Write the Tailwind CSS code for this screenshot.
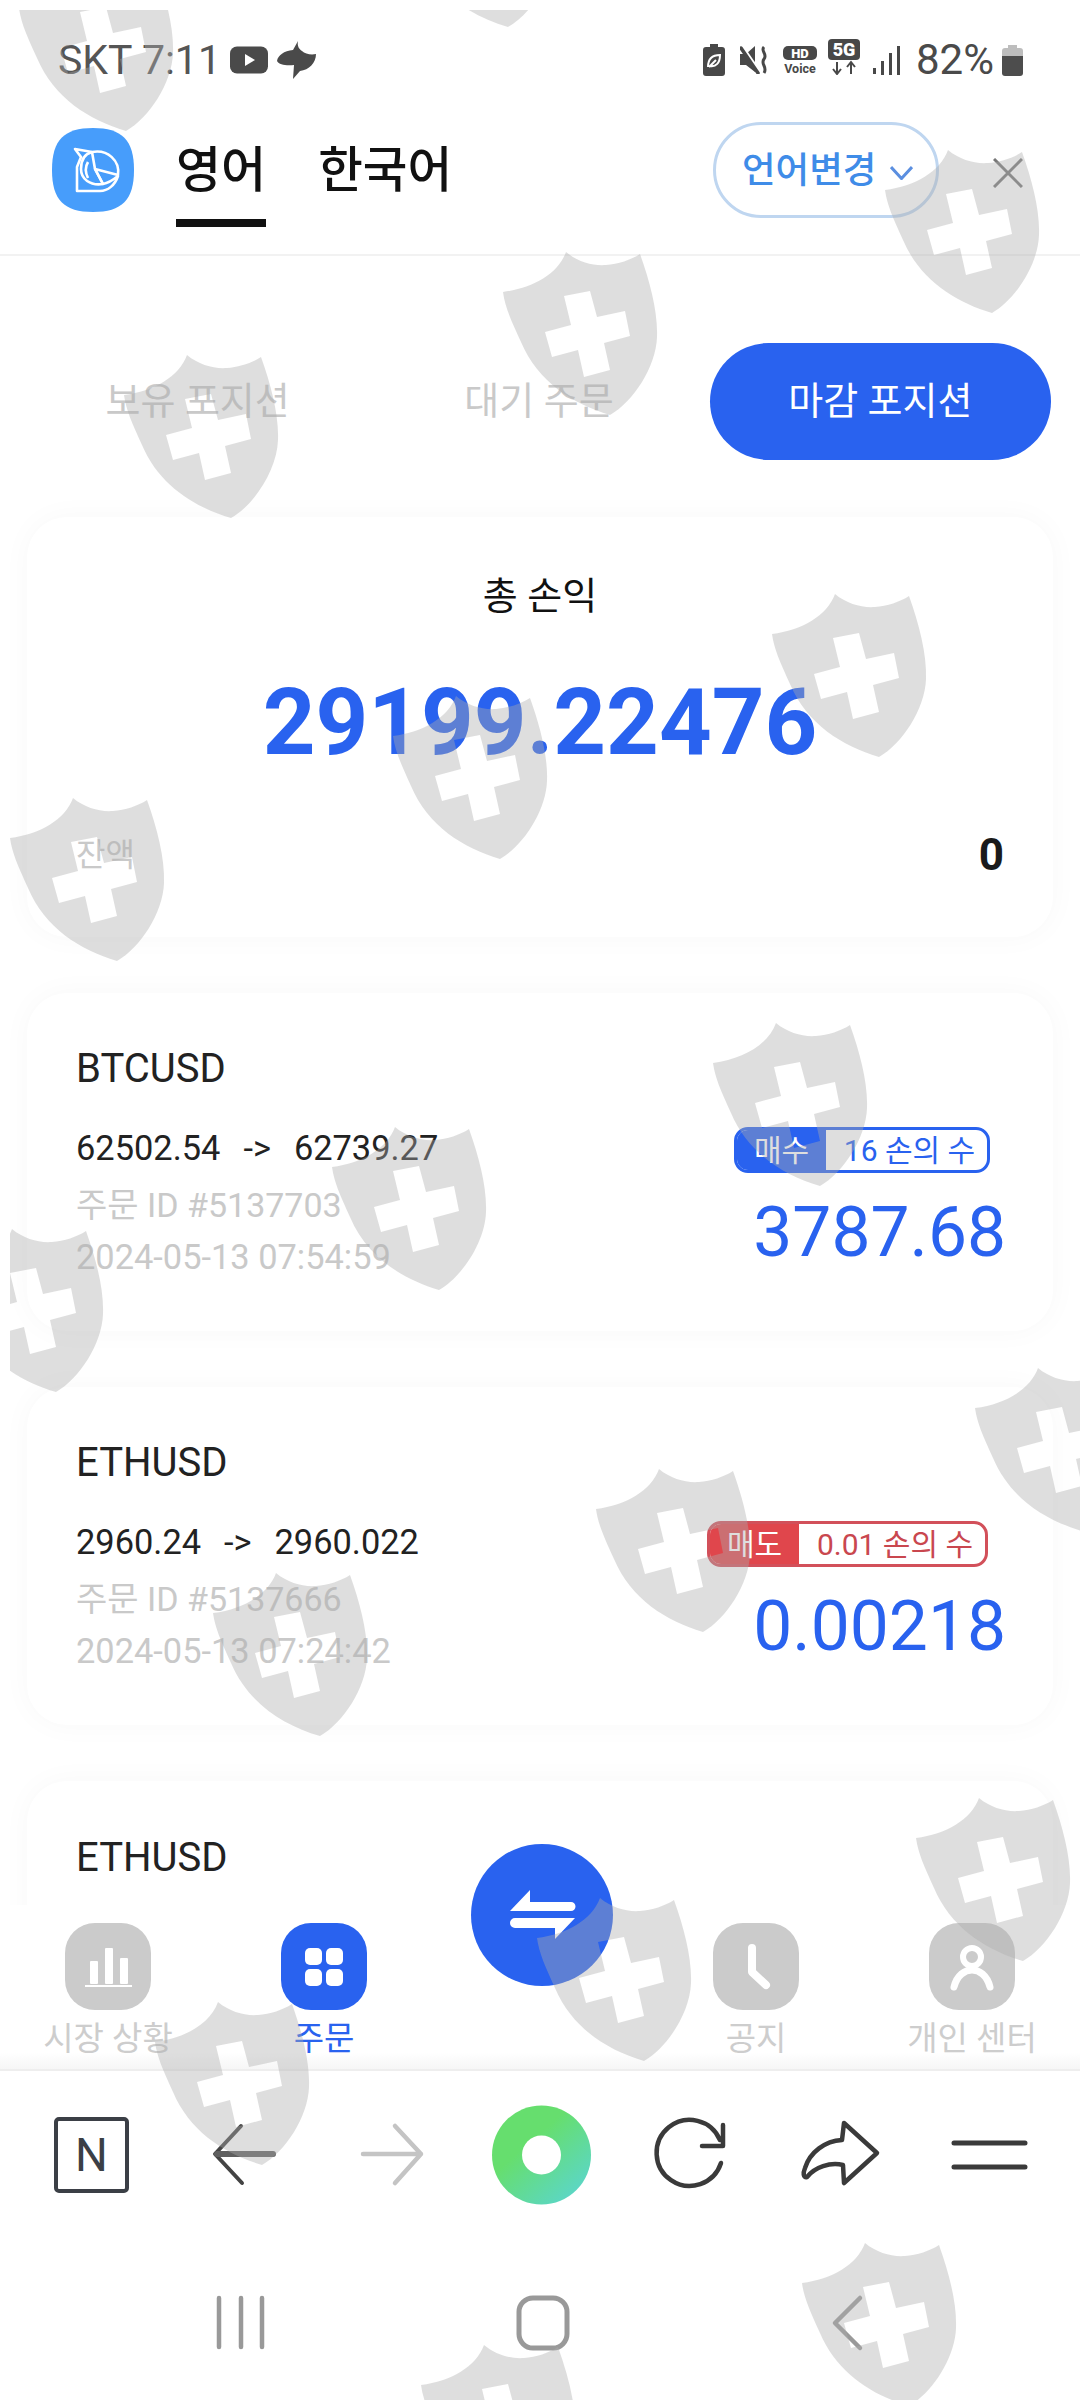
<!DOCTYPE html>
<html lang="ko">
<head>
<meta charset="utf-8">
<title>주문</title>
<script src="https://cdn.jsdelivr.net/npm/@tailwindcss/browser@4"></script>
</head>
<body class="bg-white">
<div class="relative w-[1080px] h-[2400px] overflow-hidden bg-white font-[Roboto,'Noto_Sans_CJK_KR',sans-serif]">

  <!-- status bar -->
  <div class="flex h-[120px] items-center justify-between pl-[58px] pr-[57px] text-[#555555]">
    <div class="flex items-center">
      <span class="text-[41px] leading-none whitespace-pre">SKT 7:11</span>
      <svg class="ml-[9px]" width="38" height="28" viewBox="0 0 38 28"><rect width="38" height="27" y="0.5" rx="7" fill="#4a4a4a"/><path d="M15 8 L25 14 L15 20 Z" fill="#fff"/></svg>
      <svg class="ml-[9px]" width="40" height="38" viewBox="0 0 40 38"><path d="M21 0 L16 9 C 7 10 1 14 0 20 C 2 24 10 25 17 24 L16 38 L23 30 C 32 29 39 22 39 13 C 34 14 28 13 25 10 C 22 8 20 5 21 0 Z" fill="#4a4a4a"/></svg>
    </div>
    <div class="flex items-center">
      <svg width="22" height="32" viewBox="0 0 22 32"><path d="M7 0 H15 V3 H19 A3 3 0 0 1 22 6 V29 A3 3 0 0 1 19 32 H3 A3 3 0 0 1 0 29 V6 A3 3 0 0 1 3 3 H7 Z" fill="#484848"/><path d="M5 23 C 5 15 9 11 17 11 C 17 19 13 23 7 22 M6 23 L13 16" fill="none" stroke="#fff" stroke-width="2"/></svg>
      <svg class="ml-[15px]" width="30" height="28" viewBox="0 0 30 28"><path d="M0 8 H6 L15 0 V26 L6 19 H0 Z" fill="#484848"/><path d="M2 1 L20 27" stroke="#fff" stroke-width="4"/><path d="M1 2 L18 27" stroke="#484848" stroke-width="3.500" stroke-linecap="round"/><path d="M24 1 C 20 5 28 8 24 13 C 20 18 28 21 24 27" fill="none" stroke="#484848" stroke-width="3"/></svg>
      <svg class="ml-[13px]" width="34" height="29" viewBox="0 0 34 29"><rect width="34" height="14" rx="5" fill="#484848"/><text x="17" y="12" text-anchor="middle" font-size="13" font-weight="900" fill="#fff" font-family="Roboto">HD</text><text x="17" y="27" text-anchor="middle" font-size="12.500" font-weight="700" fill="#484848" font-family="Roboto">Voice</text></svg>
      <svg class="ml-[11px] -mt-[6px]" width="32" height="36" viewBox="0 0 32 36"><rect width="32" height="21" rx="4" fill="#484848"/><text x="16" y="17" text-anchor="middle" font-size="18" font-weight="900" fill="#fff" font-family="Roboto">5G</text><path d="M9 23 V34 M5 30 L9 35 L13 30 M23 35 V24 M19 28 L23 23 L27 28" fill="none" stroke="#484848" stroke-width="2"/></svg>
      <svg class="ml-[13px]" width="27" height="29" viewBox="0 0 27 29"><rect x="0" y="22" width="3" height="6" fill="#484848"/><rect x="8" y="15" width="3" height="14" fill="#484848"/><rect x="16" y="7" width="3" height="22" fill="#484848"/><rect x="24" y="0" width="3" height="29" fill="#484848"/></svg>
      <span class="ml-[16px] text-[42px] leading-none text-[#4a4a4a]">82%</span>
      <svg class="ml-[8px]" width="21" height="31" viewBox="0 0 21 31"><path d="M6 0 H15 V3 H18 A3 3 0 0 1 21 6 V11 H0 V6 A3 3 0 0 1 3 3 H6 Z" fill="#bdbdbd"/><path d="M0 11 H21 V28 A3 3 0 0 1 18 31 H3 A3 3 0 0 1 0 28 Z" fill="#4d4d4d"/></svg>
    </div>
  </div>

  <!-- header -->
  <div class="flex h-[136px] items-start border-b-2 border-[#f2f2f2] pl-[52px]">
    <div class="flex h-[100px] items-center">
      <svg width="82" height="84" viewBox="52 129 82 84"><path d="M93 129 C 122 129 134 141 134 171 C 134 201 122 213 93 213 C 64 213 52 201 52 171 C 52 141 64 129 93 129 Z" fill="#479dfb"/><g fill="none" stroke="#fff" stroke-width="2.600" stroke-linejoin="round"><path d="M75 150 L92 153 C 108 150 120 162 118 176 L95 170 L103 185 C 109 184 113 181 118 177 C 115 186 108 192 100 192 L77 192 L77 168 L81 158 Z"/><path d="M92 153 C 84 155 81 162 81 170 C 81 180 90 187 103 185"/><path d="M95 170 L92 153 M95 170 L103 185 M88 163 C 85 168 85 173 88 179"/></g></svg>
    </div>
    <div class="ml-[42px] mt-[1px] h-[106px] border-b-8 border-[#111111] text-[49px] font-medium leading-[100px] text-[#111111]">영어</div>
    <div class="ml-[52px] mt-[1px] text-[48.500px] font-medium leading-[100px] text-[#111111]">한국어</div>
    <div class="ml-auto mt-[2px] flex h-[96px] w-[226px] items-center rounded-full border-[3px] border-[#bfd6f0] pl-[26px] pt-[2px] text-[36.500px] font-medium text-[#3f8ce8]">
      <span>언어변경</span>
      <svg class="ml-[14px] mt-[4px]" width="23" height="14" viewBox="0 0 23 14"><path d="M1 1 L11.500 12.500 L22 1" fill="none" stroke="#5b8fe0" stroke-width="3"/></svg>
    </div>
    <svg class="ml-[54px] mr-[57px] mt-[38px]" width="30" height="30" viewBox="0 0 30 30"><path d="M1 1 L29 29 M29 1 L1 29" stroke="#777777" stroke-width="3"/></svg>
  </div>

  <!-- scrolling content -->
  <div class="h-[1649px] overflow-hidden px-[27px]">
    <div class="mr-[2px] flex pt-[87px] text-[38px] text-[#c9c9c9]">
      <div class="flex h-[117px] flex-1 items-center justify-center">보유 포지션</div>
      <div class="flex h-[117px] flex-1 items-center justify-center">대기 주문</div>
      <div class="flex h-[117px] flex-1 items-center justify-center rounded-full bg-[#2962ef] text-white">마감 포지션</div>
    </div>

    <div class="mt-[57px] h-[420px] rounded-[40px] bg-white px-[49px] pt-[53px] shadow-[0_0_30px_rgba(0,0,0,0.03)]">
      <div class="text-center text-[38px] leading-[52px] text-[#111111]">총 손익</div>
      <div class="mt-[46px] text-center text-[92px] font-bold leading-[110px] text-[#2962ef]">29199.22476</div>
      <div class="mt-[47px] flex items-center justify-between">
        <span class="text-[32px] leading-[60px] text-[#c9c9c9]">잔액</span>
        <span class="text-[44px] font-bold leading-[60px] text-[#1a1a1a]">0</span>
      </div>
    </div>

    <div class="mt-[56px] flex h-[338px] justify-between rounded-[40px] bg-white pl-[49px] pr-[50px] shadow-[0_0_30px_rgba(0,0,0,0.03)]">
      <div class="pt-[51px]">
        <div class="text-[40px] leading-[50px] text-[#222222]">BTCUSD</div>
        <div class="mt-[29px] flex text-[34.400px] leading-[50px] text-[#222222]"><span>62502.54</span><span class="ml-[23px]">-&gt;</span><span class="ml-[23px]">62739.27</span></div>
        <div class="mt-[7px] text-[34px] leading-[50px] text-[#c9c9c9]">주문 ID #5137703</div>
        <div class="mt-[2px] text-[34.400px] leading-[50px] text-[#c9c9c9]">2024-05-13 07:54:59</div>
      </div>
      <div class="flex flex-col items-end pt-[134px]">
        <div class="mr-[13px] flex h-[46px] w-[256px] items-stretch overflow-hidden rounded-[14px] border-[3px] border-[#2962ef] text-[30px]">
          <div class="flex w-[89px] items-center justify-center bg-[#2962ef] text-white">매수</div>
          <div class="flex flex-1 items-center justify-center pl-[6px] text-[#2962ef]">16 손의 수</div>
        </div>
        <div class="-mr-[3px] mt-[20px] text-[69.500px] leading-[80px] text-[#2962ef]">3787.68</div>
      </div>
    </div>

    <div class="mt-[56px] flex h-[338px] justify-between rounded-[40px] bg-white pl-[49px] pr-[50px] shadow-[0_0_30px_rgba(0,0,0,0.03)]">
      <div class="pt-[51px]">
        <div class="text-[40px] leading-[50px] text-[#222222]">ETHUSD</div>
        <div class="mt-[29px] flex text-[34.400px] leading-[50px] text-[#222222]"><span>2960.24</span><span class="ml-[23px]">-&gt;</span><span class="ml-[23px]">2960.022</span></div>
        <div class="mt-[7px] text-[34px] leading-[50px] text-[#c9c9c9]">주문 ID #5137666</div>
        <div class="mt-[2px] text-[34.400px] leading-[50px] text-[#c9c9c9]">2024-05-13 07:24:42</div>
      </div>
      <div class="flex flex-col items-end pt-[134px]">
        <div class="mr-[15px] flex h-[46px] w-[281px] items-stretch overflow-hidden rounded-[14px] border-[3px] border-[#d2505a] text-[30px]">
          <div class="flex w-[89px] items-center justify-center bg-[#e0464c] text-white">매도</div>
          <div class="flex flex-1 items-center justify-center pl-[6px] text-[#c9474f]">0.01 손의 수</div>
        </div>
        <div class="-mr-[3px] mt-[20px] text-[69.500px] leading-[80px] text-[#2962ef]">0.00218</div>
      </div>
    </div>

    <div class="mt-[56px] h-[338px] rounded-[40px] bg-white pl-[49px] pt-[52px] shadow-[0_0_30px_rgba(0,0,0,0.03)]">
      <div class="text-[40px] leading-[50px] text-[#222222]">ETHUSD</div>
    </div>
  </div>

  <!-- bottom tab bar -->
  <div class="relative grid h-[166px] grid-cols-5 border-b-2 border-[#eeeeee] bg-linear-to-b from-white from-90% to-[#f6f6f6] text-[33px] text-[#cdcdcd]">
    <div class="flex flex-col items-center pt-[18px]">
      <div class="h-[87px] w-[86px] rounded-[30px] bg-[#cbcbcb]">
        <svg width="86" height="87" viewBox="0 0 86 87"><g fill="#fff"><rect x="25" y="38" width="8" height="23" rx="1"/><rect x="40" y="25" width="8" height="36" rx="1"/><rect x="55" y="35" width="8" height="26" rx="1"/><rect x="20" y="62" width="47" height="2"/></g></svg>
      </div>
      <span class="mt-[5px] leading-[48px]">시장 상황</span>
    </div>
    <div class="flex flex-col items-center pt-[18px] text-[#2962ef]">
      <div class="h-[87px] w-[86px] rounded-[30px] bg-[#2962ef]">
        <svg width="86" height="87" viewBox="0 0 86 87"><g fill="#fff"><rect x="24" y="25" width="17" height="17" rx="5"/><rect x="45" y="25" width="17" height="17" rx="5"/><rect x="24" y="46" width="17" height="17" rx="5"/><rect x="45" y="46" width="17" height="17" rx="5"/></g></svg>
      </div>
      <span class="mt-[5px] leading-[48px]">주문</span>
    </div>
    <div></div>
    <div class="flex flex-col items-center pt-[18px]">
      <div class="h-[87px] w-[86px] rounded-[30px] bg-[#cbcbcb]">
        <svg width="86" height="87" viewBox="0 0 86 87"><path d="M39 25 V49 L53 62" fill="none" stroke="#fff" stroke-width="8" stroke-linecap="round" stroke-linejoin="round"/></svg>
      </div>
      <span class="mt-[5px] leading-[48px]">공지</span>
    </div>
    <div class="flex flex-col items-center pt-[18px]">
      <div class="h-[87px] w-[86px] rounded-[30px] bg-[#cbcbcb]">
        <svg width="86" height="87" viewBox="0 0 86 87"><circle cx="43" cy="34" r="9" fill="none" stroke="#fff" stroke-width="6"/><path d="M25 64 C 28 52 36 47 43 47 C 50 47 58 52 61 64" fill="none" stroke="#fff" stroke-width="7" stroke-linecap="round"/></svg>
      </div>
      <span class="mt-[5px] leading-[48px]">개인 센터</span>
    </div>
    <!-- floating exchange button -->
    <div class="absolute left-[471px] top-[-61px] h-[142px] w-[142px] rounded-full bg-[#2962ef]">
      <svg width="142" height="142" viewBox="0 0 142 142"><path d="M39 67 L59 46 V58 H100 A4.500 4.500 0 0 1 100 67 Z M104 74 L84 95 V84 H44 A5 5 0 0 1 44 74 Z" fill="#fff"/></svg>
    </div>
  </div>

  <!-- browser toolbar -->
  <svg class="block" width="1080" height="168" viewBox="0 2071 1080 168">
    <rect x="56" y="2119" width="71" height="72" rx="3" fill="none" stroke="#3b3f46" stroke-width="4"/>
    <text x="91.500" y="2171" text-anchor="middle" font-size="46" font-weight="400" fill="#3b3f46" font-family="Roboto">N</text>
    <path d="M241 2126 L215 2154 L242 2183" fill="none" stroke="#444444" stroke-width="4" stroke-linecap="round" stroke-linejoin="round"/>
    <path d="M217 2154 H273" stroke="#5f5f5f" stroke-width="6" stroke-linecap="round"/>
    <path d="M395 2126 L421 2154 L395 2183 M363 2154 H421" fill="none" stroke="#c4c4c4" stroke-width="4.500" stroke-linecap="round" stroke-linejoin="round"/>
    <defs><linearGradient id="g" x1="0.15" y1="0.15" x2="0.85" y2="0.95"><stop offset="0.3" stop-color="#66de6e"/><stop offset="1" stop-color="#5bd6cb"/></linearGradient></defs>
    <circle cx="541.500" cy="2155" r="49.500" fill="url(#g)"/>
    <circle cx="541.500" cy="2155" r="19.500" fill="#fff"/>
    <path d="M721 2163 A 33 33 0 1 1 720 2140 M723 2125 V2146 H702" fill="none" stroke="#3a3a3a" stroke-width="4.500" stroke-linecap="round" stroke-linejoin="round"/>
    <path d="M844 2123 L877 2153 L844 2183 L843 2165 C 830 2162 815 2167 807 2177 C 803 2178 803 2173 805 2168 C 810 2152 825 2141 842 2140 Z" fill="none" stroke="#3a3a3a" stroke-width="4.500" stroke-linejoin="round"/>
    <path d="M954 2143 H1025 M954 2167 H1025" stroke="#3a3a3a" stroke-width="5" stroke-linecap="round"/>
  </svg>

  <!-- android navigation -->
  <svg class="block" width="1080" height="161" viewBox="0 2239 1080 161">
    <path d="M219 2298 V2347 M241 2298 V2347 M262 2298 V2347" stroke="#999999" stroke-width="4.500" stroke-linecap="round"/>
    <rect x="519" y="2298" width="48" height="50" rx="14" fill="none" stroke="#999999" stroke-width="5"/>
    <path d="M860 2298 L835 2323 L860 2348" fill="none" stroke="#999999" stroke-width="4.500" stroke-linecap="round" stroke-linejoin="round"/>
  </svg>

  <!-- shield watermarks lying over the page -->
  <svg class="pointer-events-none absolute left-0 top-0" width="1080" height="2400" viewBox="0 0 1080 2400">
    <defs>
      <clipPath id="c"><rect x="10" y="10" width="1070" height="2390"/></clipPath>
      <path id="s" fill-rule="evenodd" d="M63 0 C 75 10 90 14 103 13 C 115 12 128 8 137 2 C 147 30 155 60 154 85 C 153 115 130 150 107 163 C 70 152 35 130 18 90 C 8 68 2 55 0 40 C 30 36 55 22 63 0 Z M61 44 L87 39 L94 65 L122 59 L127 84 L101 91 L107 118 L81 125 L75 98 L49 105 L42 80 L68 73 Z"/>
    </defs>
    <g clip-path="url(#c)" class="fill-[#adadad]/40">
      <use href="#s" x="19" y="-32"/>
      <use href="#s" x="401" y="-136"/>
      <use href="#s" x="503" y="252"/>
      <use href="#s" x="885" y="150"/>
      <use href="#s" x="124" y="355"/>
      <use href="#s" x="772" y="594"/>
      <use href="#s" x="393" y="696"/>
      <use href="#s" x="10" y="798"/>
      <use href="#s" x="713" y="1023"/>
      <use href="#s" x="332" y="1127"/>
      <use href="#s" x="-51" y="1229"/>
      <use href="#s" x="975" y="1368"/>
      <use href="#s" x="596" y="1469"/>
      <use href="#s" x="213" y="1573"/>
      <use href="#s" x="916" y="1798"/>
      <use href="#s" x="537" y="1898"/>
      <use href="#s" x="155" y="2002"/>
      <use href="#s" x="802" y="2243"/>
      <use href="#s" x="421" y="2345"/>
    </g>
  </svg>
</div>
</body>
</html>
